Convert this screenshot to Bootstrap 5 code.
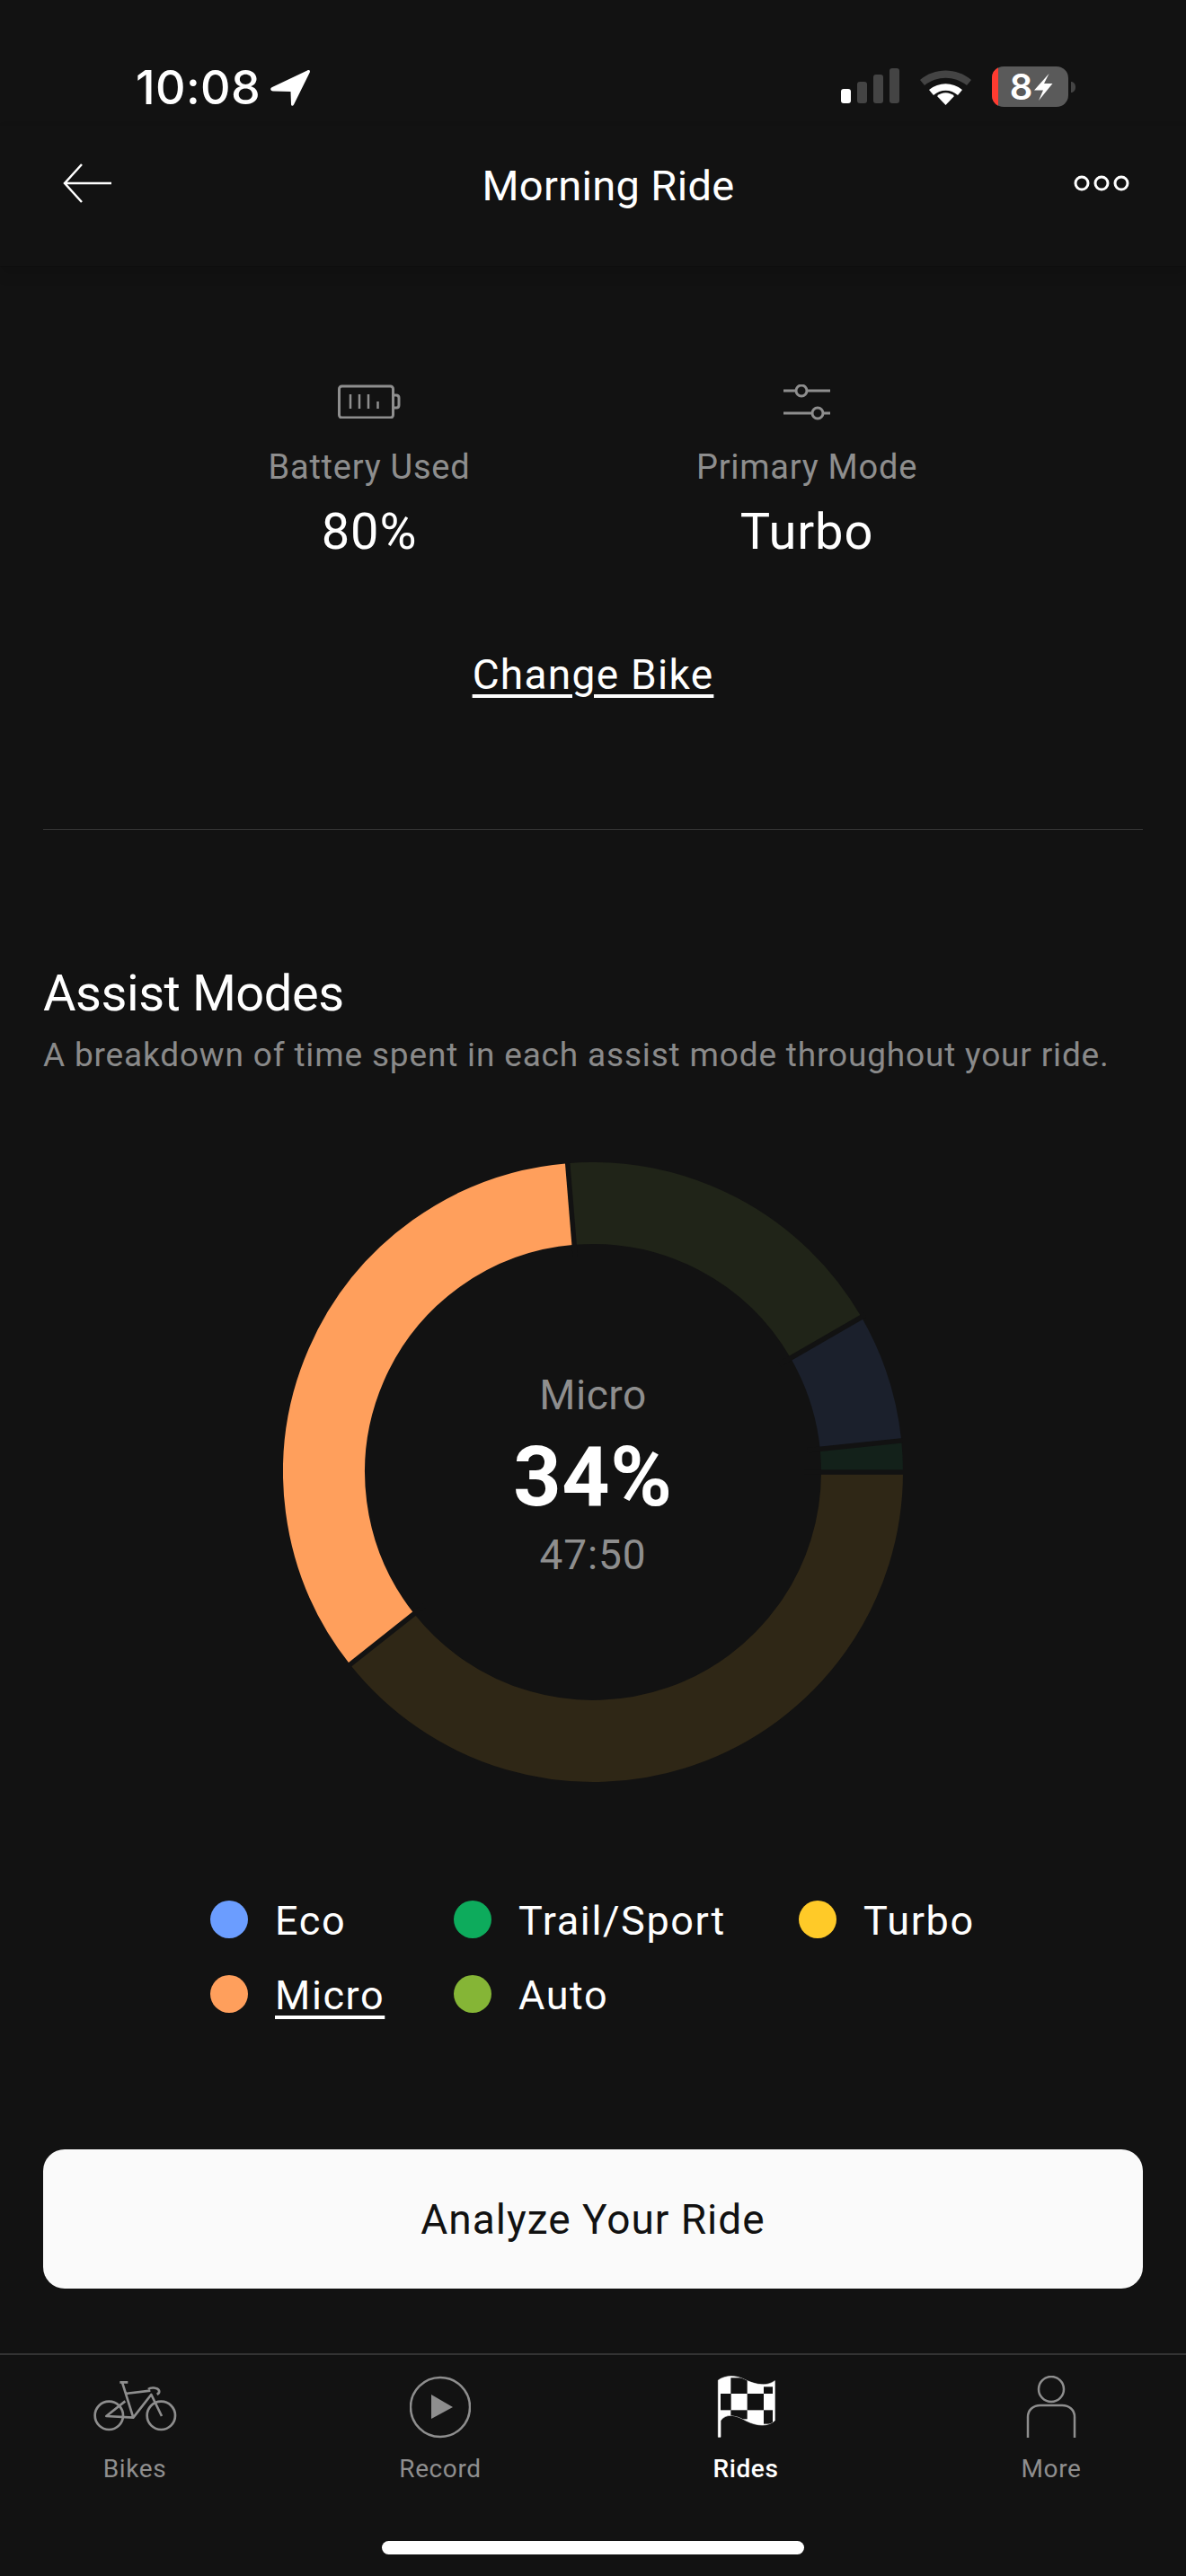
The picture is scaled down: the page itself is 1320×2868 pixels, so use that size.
<!doctype html>
<html lang="en"><head><meta charset="utf-8">
<link href="https://cdn.jsdelivr.net/npm/bootstrap@5.3.0/dist/css/bootstrap.min.css" rel="stylesheet">
<style>
html,body{background:#121212}
body{font-family:Roboto,"Liberation Sans",sans-serif;color:#fff;margin:0}
.app{width:1320px;height:2868px;overflow:hidden;background:#121212}
.status{height:140px;padding:71px 122px 0 151px}
.clock{font:500 52px/54px Inter,sans-serif;letter-spacing:.4px;gap:11px;height:54px}
.sicons{gap:23px;padding-top:3px}
.batt{margin-top:-3px}
.topbar{height:157px;padding:0 62px 28px 70px;border-bottom:1px solid #0e0e0e;box-shadow:0 8px 14px rgba(0,0,0,.12)}
.ttl{font-size:47px;font-weight:450;letter-spacing:.35px;line-height:54px;padding:6px 0 0 36px}
.stats{height:426px;padding:131px 11px 0 0}
.st{width:487px}
.st-ic{height:40px}
.st-lbl{font-size:38px;font-weight:450;color:#8e8e8e;letter-spacing:.75px;line-height:44px;margin-top:30px}
.st-val{font-size:56px;font-weight:450;letter-spacing:.9px;line-height:60px;margin-top:20px}
.chg{font-size:46px;font-weight:450;letter-spacing:1.3px;color:#fff;line-height:56px;text-decoration:underline;text-decoration-thickness:4px;text-underline-offset:6px}
.chg:hover{color:#fff}
.rule{height:1px;background:#333;margin:144px 48px 0}
.sec{padding:0 48px}
.sec h2{font-size:56px;font-weight:450;letter-spacing:-.45px;line-height:64px;margin:150px 0 0}
.sec p{font-size:37px;color:#8a8a8a;letter-spacing:.83px;line-height:44px;margin:15px 0 0;white-space:nowrap}
.donutbox{position:relative;width:690px;height:690px;margin:97px auto 0}
.donutbox svg{display:block}
.dc{position:absolute;inset:0;text-align:center;padding-top:234px}
.dc1{font-size:46px;font-weight:450;color:#8e8e8e;letter-spacing:.5px;line-height:50px}
.dc2{font-size:93px;font-weight:700;line-height:96px;margin-top:19px;letter-spacing:.6px}
.dc3{font-size:46px;font-weight:450;color:#8e8e8e;letter-spacing:.9px;line-height:50px;margin-top:13px}
.legend{margin:130px 0 0 234px;display:grid;grid-template-columns:271px 384px auto;row-gap:37px;width:880px}
.li{gap:30px;font-size:45px;font-weight:450;letter-spacing:1.6px;height:46px}
.li span{line-height:42px;padding-top:4px}
.li i{width:42px;height:42px;border-radius:50%;display:block;flex:none}
.li u{text-decoration-thickness:4px;text-underline-offset:7px}
.btn.cta{margin:150px 48px 0;height:155px;padding-top:8px;background:#fafafa;border-radius:24px;color:#111;font-size:46px;font-weight:450;letter-spacing:1px;width:1224px;border:0;display:block}
.tabs{margin-top:72px;border-top:2px solid #333;display:grid;grid-template-columns:repeat(4,300px);column-gap:40px;padding-top:23px}
.tb{text-align:center;color:#8e8e8e;font-size:28px;letter-spacing:.6px;line-height:34px}
.tb svg{display:block;margin:0 auto 17px}
.tb.on{color:#fff;font-weight:500}
.home{width:470px;height:15px;border-radius:8px;background:#fff;margin:63px auto 0}
</style></head><body>
<div class="app">
 <div class="status d-flex justify-content-between align-items-start">
  <div class="clock d-flex align-items-center">10:08
   <svg width="44" height="40" viewBox="0 0 44 40"><path d="M41 .5c2-1 3.500 0 2.800 2L26 38.500c-1 2-3 1.700-3-.5L22.500 24 3 23.500c-3 0-4-3-1-4.500z" fill="#fff"/></svg>
  </div>
  <div class="sicons d-flex align-items-start">
   <svg width="65" height="42" viewBox="0 0 65 42"><rect x="0" y="25" width="11" height="16" rx="3" fill="#fff"/><rect x="18" y="17" width="11" height="24" rx="3" fill="#444"/><rect x="36" y="9" width="11" height="32" rx="3" fill="#444"/><rect x="54" y="2" width="11" height="39" rx="3" fill="#444"/></svg>
   <svg width="57" height="44" viewBox="0 0 57 44"><path d="M0 13C16-1 41-1 57 13l-5 6C38 8 19 8 5 19z" fill="#444" transform="translate(0,2)"/><path d="M10 24c11-9 26-9 37 0l-5 6c-8-7-19-7-27 0z" fill="#fff" transform="translate(0,2)"/><path d="M19 33c5-5 14-5 19 0l-9.500 10z" fill="#fff"/></svg>
   <svg class="batt" width="94" height="51" viewBox="0 -3 94 51"><rect x="0" y="0" width="85" height="45" rx="13" fill="#5a5a5a"/><path d="M7 1.200A13 13 0 0 0 0 13v19a13 13 0 0 0 7 11.800z" fill="#ff3b30"/><path d="M88 17c3 0 5 2.500 5 6s-2 6-5 6z" fill="#444"/><text x="32.500" y="36.500" font-family="Inter,sans-serif" font-size="40" font-weight="600" fill="#fff" text-anchor="middle">8</text><path d="M63.500 8 47 26.500h10L52 38l15.500-19H58z" fill="#fff"/></svg>
  </div>
 </div>
 <div class="topbar d-flex align-items-center">
  <svg width="54" height="44" viewBox="0 0 54 44" class="flex-shrink-0"><path d="M54 22H2M21 1 2 22l19 21" fill="none" stroke="#fff" stroke-width="2.500"/></svg>
  <div class="ttl flex-grow-1 text-center">Morning Ride</div>
  <svg width="64" height="18" viewBox="0 0 64 18" class="flex-shrink-0"><g fill="none" stroke="#fff" stroke-width="3"><circle cx="10" cy="9" r="7"/><circle cx="32" cy="9" r="7"/><circle cx="54" cy="9" r="7"/></g></svg>
 </div>
 <div class="stats d-flex justify-content-center">
  <div class="st text-center">
   <div class="st-ic"><svg width="70" height="38" viewBox="0 0 70 38"><g fill="none" stroke="#8e8e8e" stroke-width="3"><rect x="1.500" y="2" width="60" height="35" rx="3"/><path d="M61 12h4c2 0 3 1 3 3v8c0 2-1 3-3 3h-4"/><path d="M14 11v16M24 11v16M34 11v16M44.500 19v8" stroke-width="2.500"/></g></svg></div>
   <div class="st-lbl">Battery Used</div><div class="st-val">80%</div>
  </div>
  <div class="st text-center">
   <div class="st-ic"><svg width="54" height="40" viewBox="0 0 54 40"><g fill="none" stroke="#8e8e8e" stroke-width="3"><path d="M1 7h13M28 7h25M1 32h31M46 32h7"/><circle cx="21" cy="7" r="6"/><circle cx="39" cy="32" r="6"/></g></svg></div>
   <div class="st-lbl">Primary Mode</div><div class="st-val">Turbo</div>
  </div>
 </div>
 <a class="chg d-block text-center" href="#">Change Bike</a>
 <div class="rule"></div>
 <div class="sec">
  <h2>Assist Modes</h2>
  <p>A breakdown of time spent in each assist mode throughout your ride.</p>
 </div>
 <div class="donutbox">
  <svg width="690" height="690" viewBox="0 0 690 690">
   <g fill="none" stroke-width="91">
    <path stroke="#2f2716" d="M644.500 345A299.500 299.500 0 0 1 110.300 531"/>
    <path stroke="#ff9f5c" d="M110.300 531A299.500 299.500 0 0 1 320.500 46.500"/>
    <path stroke="#202418" d="M320.500 46.500A299.500 299.500 0 0 1 604.400 195.300"/>
    <path stroke="#1b202c" d="M604.400 195.300A299.500 299.500 0 0 1 643 314.700"/>
    <path stroke="#13211a" d="M643 314.700A299.500 299.500 0 0 1 644.500 345"/>
   </g>
   <g stroke="#121212" stroke-width="5.500">
    <path d="M580 345H695"/><path d="M583.800 320.700 693 309.500"/><path d="M552.800 225 648 170"/><path d="M325.300 105.800 316.300-3.800"/><path d="M156.900 494 70.600 562.400"/>
   </g>
  </svg>
  <div class="dc"><div class="dc1">Micro</div><div class="dc2">34%</div><div class="dc3">47:50</div></div>
 </div>
 <div class="legend">
  <div class="li d-flex align-items-center"><i style="background:#6b9dff"></i><span>Eco</span></div>
  <div class="li d-flex align-items-center"><i style="background:#0dab5c"></i><span>Trail/Sport</span></div>
  <div class="li d-flex align-items-center"><i style="background:#ffca28"></i><span>Turbo</span></div>
  <div class="li d-flex align-items-center"><i style="background:#ff9f5c"></i><span><u>Micro</u></span></div>
  <div class="li d-flex align-items-center"><i style="background:#85b536"></i><span>Auto</span></div>
 </div>
 <button class="btn cta">Analyze Your Ride</button>
 <div class="tabs">
  <div class="tb"><svg width="140" height="70" viewBox="0 45 420 210"><g fill="none" stroke="#8e8e8e" stroke-width="8" stroke-linejoin="round"><circle cx="124" cy="178" r="47"/><circle cx="298" cy="178" r="47"/><path d="M160 67h27M168 67l37 118-90-5 63-50M178 105l84-10M205 185l60-77 35 72"/><path d="M255 90c8-7 30-6 36 4 2 6-2 11-7 13"/></g></svg>Bikes</div>
  <div class="tb"><svg width="68" height="70" viewBox="0 0 68 70"><circle cx="34" cy="35" r="33" fill="none" stroke="#8e8e8e" stroke-width="2.500"/><path d="M24 21 48 35 24 48z" fill="#8e8e8e"/></svg>Record</div>
  <div class="tb on"><svg width="100" height="70" viewBox="0 45 300 210"><defs><clipPath id="fc"><path d="M58 60C80 45 110 42 140 55C175 72 215 85 247 62V195C225 215 190 215 150 195C115 175 85 170 60 195z"/></clipPath></defs><path d="M58 250V60C80 45 110 42 140 55C175 72 215 85 247 62V195C225 215 190 215 150 195C115 175 85 170 66 195V250z" fill="#fff" stroke="#fff" stroke-width="2"/><g fill="#111" clip-path="url(#fc)"><rect x="100" y="52" width="55" height="53"/><rect x="210" y="82" width="30" height="23"/><rect x="66" y="105" width="35" height="55"/><rect x="155" y="105" width="55" height="55"/><rect x="100" y="160" width="55" height="30"/><rect x="210" y="160" width="30" height="46"/></g></svg>Rides</div>
  <div class="tb"><svg width="56" height="70" viewBox="0 0 56 70"><g fill="none" stroke="#8e8e8e" stroke-width="2.500"><circle cx="28" cy="15" r="14"/><path d="M2 69V46c0-8 6-13 14-13h24c8 0 14 5 14 13v23"/></g></svg>More</div>
 </div>
 <div class="home"></div>
</div>
<script src="https://cdn.jsdelivr.net/npm/bootstrap@5.3.0/dist/js/bootstrap.bundle.min.js"></script>
</body></html>
